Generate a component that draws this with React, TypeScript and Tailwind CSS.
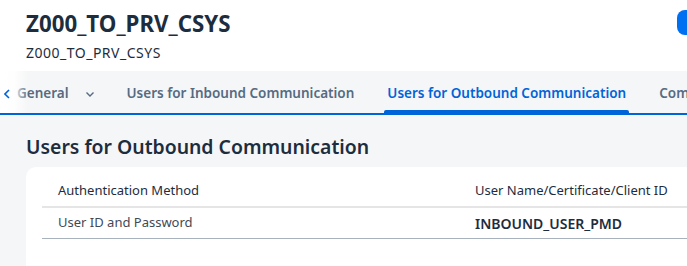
import React from 'react';

const tabs = ['Users for Inbound Communication', 'Users for Outbound Communication', 'Communication'];

export default function App() {
  return (
    <div className="w-[687px] h-[266px] overflow-hidden bg-[#f5f6f7] text-[#1d2d3e]" style={{ fontFamily: '"Noto Sans", Arial, sans-serif' }}>
      {/* header */}
      <div className="bg-white h-[71px] pl-[26px] pt-[10px] relative">
        <h1 className="text-[22.3px] leading-[28px] font-bold text-[#1d2d3e]">Z000_TO_PRV_CSYS</h1>
        <div className="text-[14px] leading-[18px] mt-[6px] tracking-[0.5px] text-[#1d2d3e]">Z000_TO_PRV_CSYS</div>
        <div className="absolute left-[677px] top-[10px] w-[40px] h-[25px] rounded-[8px] bg-[#0070f2]" />
      </div>

      {/* tab bar */}
      <div className="relative h-[44px] bg-[#f5f6f7] border-b-2 border-[#0064d9] flex items-center whitespace-nowrap">
        <div className="flex items-center pl-[17px] pt-[3px] text-[13.5px] font-semibold text-[#556b82]">
          <span>General</span>
          <svg className="ml-[16px] w-[10px] h-[10px]" viewBox="0 0 10 10" fill="none" stroke="#556b82" strokeWidth="1.4">
            <path d="M1.5 3.5 L5 7 L8.5 3.5" />
          </svg>
        </div>
        <div className="flex items-center ml-[32px] gap-[33px]">
          {tabs.map((t, i) => (
            <div key={t} className={`relative h-[44px] pt-[3px] flex items-center text-[13.5px] font-semibold ${i === 1 ? 'text-[#0064d9]' : 'text-[#556b82]'}`}>
              {t}
              {i === 1 && <div className="absolute left-[-3px] right-[-3px] bottom-[1px] h-[3px] rounded-t-[2px] bg-[#0064d9]" />}
            </div>
          ))}
        </div>
        {/* left fade + arrow */}
        <div className="absolute left-0 top-0 h-full w-[28px] bg-gradient-to-r from-white via-white/90 to-white/0 flex items-center pl-[4px] pt-[3px]">
          <svg className="w-[6px] h-[10px]" viewBox="0 0 6 10" fill="none" stroke="#0064d9" strokeWidth="1.6">
            <path d="M5 1 L1 5 L5 9" />
          </svg>
        </div>
      </div>

      {/* section */}
      <div className="pl-[26px] pt-[19px]">
        <h2 className="text-[19.4px] leading-[26px] font-semibold text-[#1d2d3e]">Users for Outbound Communication</h2>
        <div className="mt-[7px] bg-white rounded-tl-[10px] h-[120px] pl-[16px] pt-[14px]">
          <div className="flex h-[27px] border-b-2 border-[#e5e5e5] text-[13px] leading-[18px] text-[#1d2d3e]">
            <div className="w-[433px] pl-[16px]">Authentication Method</div>
            <div>User Name/Certificate/Client ID</div>
          </div>
          <div className="flex h-[31px] items-center border-b border-[#a8b2bd] text-[13px] text-[#3f4a56]">
            <div className="w-[433px] pl-[16px]">User ID and Password</div>
            <div className="text-[14px] font-semibold text-[#1d2d3e]">INBOUND_USER_PMD</div>
          </div>
        </div>
      </div>
    </div>
  );
}
